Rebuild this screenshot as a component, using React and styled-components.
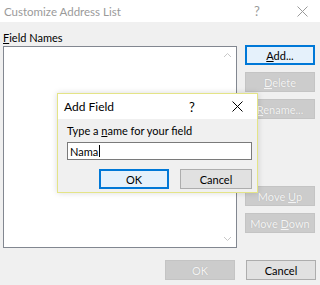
import React from "react"
import styled, { createGlobalStyle } from "styled-components"

const Global = createGlobalStyle`
  html, body {
    margin: 0;
    padding: 0;
    background: #f0f0f0;
  }
  body {
    font-family: Lato, "Noto Sans", "Liberation Sans", sans-serif;
    font-size: 11px;
    color: #000;
  }
`

const Window = styled.div`
  position: relative;
  width: 320px;
  height: 285px;
  background: #f0f0f0;
  overflow: hidden;
`

const TitleBar = styled.div`
  height: 22px;
  background: #fff;
  display: flex;
  align-items: center;
  padding-left: 4px;
  color: ${(p) => (p.inactive ? "#9a9a9a" : "#000")};
  font-size: 11.5px;
`

const TitleText = styled.span`
  flex: 1;
`

const Caption = styled.span`
  width: ${(p) => p.w}px;
  display: flex;
  justify-content: center;
  align-items: center;
  font-size: 13px;
`

const Body = styled.div`
  display: grid;
  grid-template-columns: 234px 70px;
  column-gap: 8px;
  padding: 8px 5px 0 3px;
`

const Left = styled.div`
  display: flex;
  flex-direction: column;
`

const Label = styled.div`
  height: 16px;
  line-height: 16px;
`

const Key = styled.span`
  text-decoration: underline;
  text-underline-offset: 1px;
`

const ListBox = styled.div`
  height: 202px;
  background: #fff;
  border: 1px solid #828790;
  box-sizing: border-box;
  display: flex;
  justify-content: flex-end;
`

const ScrollBar = styled.div`
  width: 17px;
  display: flex;
  flex-direction: column;
  justify-content: space-between;
  align-items: center;
  padding: 5px 0;
`

const Side = styled.div`
  display: flex;
  flex-direction: column;
  gap: 7px;
  padding-top: 15px;
  height: 203px;
  box-sizing: border-box;
`

const Button = styled.div`
  height: 20px;
  box-sizing: border-box;
  display: flex;
  align-items: center;
  justify-content: center;
  white-space: pre;
  border: ${(p) => (p.primary ? "2px solid #0078d7" : "1px solid #adadad")};
  background: ${(p) => (p.disabled ? "#cccccc" : p.primary ? "#e5f1fb" : "#e1e1e1")};
  color: ${(p) => (p.disabled ? "#f4f4f4" : "#000")};
  border-color: ${(p) => (p.disabled ? "#c4c4c4" : undefined)};
  text-shadow: ${(p) => (p.disabled ? "0 0 1px #aaaaaa" : "none")};
  width: ${(p) => p.width || "auto"};
  margin-top: ${(p) => (p.push ? "auto" : "0")};
`

const Footer = styled.div`
  display: flex;
  justify-content: flex-end;
  gap: 11px;
  padding: 12px 4px 0 0;
`

const Dialog = styled.div`
  position: absolute;
  left: 57px;
  top: 93px;
  width: 201px;
  height: 100px;
  box-sizing: border-box;
  border: 1px solid #e4e487;
  background: #f0f0f0;
  box-shadow: 0 0 6px rgba(0, 0, 0, 0.15);
  display: flex;
  flex-direction: column;
`

const DialogTitle = styled(TitleBar)`
  height: 25px;
  padding-left: 6px;
  font-size: 12px;
`

const DialogBody = styled.div`
  padding: 4px 5px 0 9px;
  display: flex;
  flex-direction: column;
`

const Field = styled.div`
  margin-top: 3px;
  height: 18px;
  box-sizing: border-box;
  border: 1px solid #7a7a7a;
  background: #fff;
  display: flex;
  align-items: center;
  padding-left: 2px;
`

const Caret = styled.span`
  display: inline-block;
  width: 1px;
  height: 12px;
  background: #000;
  margin-left: 1px;
`

const DialogFooter = styled.div`
  display: flex;
  justify-content: flex-end;
  gap: 11px;
  margin-top: 9px;
`

const Chevron = ({ up }) => (
  <svg width="9" height="6" viewBox="0 0 9 6">
    <path
      d={up ? "M1 5 L4.5 1.5 L8 5" : "M1 1 L4.5 4.5 L8 1"}
      fill="none"
      stroke="#c8c8c8"
      strokeWidth="1"
    />
  </svg>
)

const Close = () => (
  <svg width="11" height="11" viewBox="0 0 11 11">
    <path d="M0.5 0.5 L10.5 10.5 M10.5 0.5 L0.5 10.5" stroke="currentColor" strokeWidth="1" />
  </svg>
)

export default function App() {
  return (
    <Window>
      <Global />
      <TitleBar inactive>
        <TitleText>Customize Address List</TitleText>
        <Caption w={54}>?</Caption>
        <Caption w={36}>
          <Close />
        </Caption>
      </TitleBar>
      <Body>
        <Left>
          <Label>
            <Key>F</Key>ield Names
          </Label>
          <ListBox>
            <ScrollBar>
              <Chevron up />
              <Chevron />
            </ScrollBar>
          </ListBox>
        </Left>
        <Side>
          <Button primary>
            <span>
              <Key>A</Key>dd...
            </span>
          </Button>
          <Button disabled>
            <span>
              <Key>D</Key>elete
            </span>
          </Button>
          <Button disabled>
            <span>
              <Key>R</Key>ename...
            </span>
          </Button>
          <Button disabled push>
            <span>
              Move <Key>U</Key>p
            </span>
          </Button>
          <Button disabled>
            <span>
              Move <Key>D</Key>own
            </span>
          </Button>
        </Side>
      </Body>
      <Footer>
        <Button disabled width="70px">OK</Button>
        <Button width="70px">Cancel</Button>
      </Footer>

      <Dialog>
        <DialogTitle>
          <TitleText>Add Field</TitleText>
          <Caption w={50}>?</Caption>
          <Caption w={40}>
            <Close />
          </Caption>
        </DialogTitle>
        <DialogBody>
          <Label>
            Type a <Key>n</Key>ame for your field
          </Label>
          <Field>
            Nama
            <Caret />
          </Field>
          <DialogFooter>
            <Button primary width="70px">OK</Button>
            <Button width="72px">Cancel</Button>
          </DialogFooter>
        </DialogBody>
      </Dialog>
    </Window>
  )
}
